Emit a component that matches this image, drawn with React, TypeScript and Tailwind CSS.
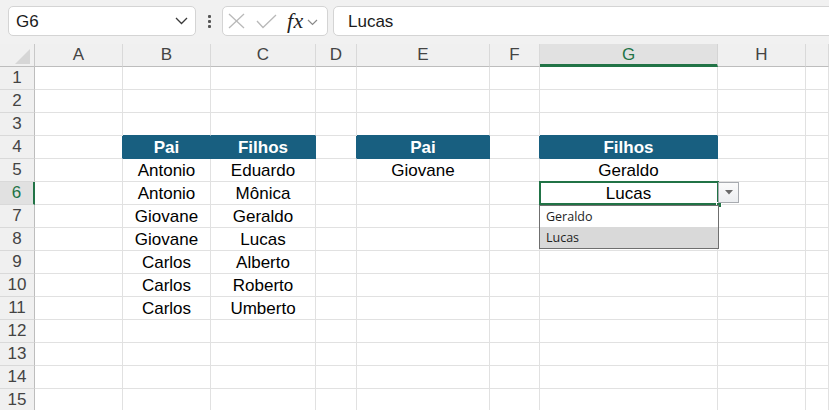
import React from "react";

type Cell = { text: string; head?: boolean };

const COLS = ["A", "B", "C", "D", "E", "F", "G", "H", "I"];

const DATA: Record<number, Record<string, Cell>> = {
  4: {
    B: { text: "Pai", head: true },
    C: { text: "Filhos", head: true },
    E: { text: "Pai", head: true },
    G: { text: "Filhos", head: true },
  },
  5: {
    B: { text: "Antonio" },
    C: { text: "Eduardo" },
    E: { text: "Giovane" },
    G: { text: "Geraldo" },
  },
  6: { B: { text: "Antonio" }, C: { text: "Mônica" }, G: { text: "Lucas" } },
  7: { B: { text: "Giovane" }, C: { text: "Geraldo" } },
  8: { B: { text: "Giovane" }, C: { text: "Lucas" } },
  9: { B: { text: "Carlos" }, C: { text: "Alberto" } },
  10: { B: { text: "Carlos" }, C: { text: "Roberto" } },
  11: { B: { text: "Carlos" }, C: { text: "Umberto" } },
};

const isHead = (row: number, col: string) => !!DATA[row]?.[col]?.head;

function Toolbar() {
  return (
    <div className="h-[44px] bg-[#f1f1f1] flex items-start pt-[6px] pl-[8px] overflow-hidden">
      {/* name box */}
      <div className="w-[188px] h-[30px] bg-white border border-[#d4d4d4] rounded-[5px] flex items-center pl-[7px] pr-[6px] shrink-0">
        <span className="text-[17px] text-[#1b1b1b] flex-1 leading-none">G6</span>
        <svg width="13" height="8" viewBox="0 0 13 8" className="mr-[1px]">
          <polyline points="1,1 6.5,6.5 12,1" fill="none" stroke="#3a3a3a" strokeWidth="1.3" />
        </svg>
      </div>
      {/* grip */}
      <div className="w-[26px] h-[30px] flex flex-col items-center justify-center gap-[2px] shrink-0">
        <span className="w-[3px] h-[3px] bg-[#555] rounded-[1px]" />
        <span className="w-[3px] h-[3px] bg-[#555] rounded-[1px]" />
        <span className="w-[3px] h-[3px] bg-[#555] rounded-[1px]" />
      </div>
      {/* cancel / enter / function */}
      <div className="w-[106px] h-[30px] bg-white border border-[#d4d4d4] rounded-[5px] flex items-center shrink-0 pl-[5px]">
        <svg width="17" height="16" viewBox="0 0 17 16">
          <line x1="1" y1="1" x2="16" y2="15" stroke="#b9b9b9" strokeWidth="1.3" />
          <line x1="16" y1="1" x2="1" y2="15" stroke="#b9b9b9" strokeWidth="1.3" />
        </svg>
        <svg width="21" height="15" viewBox="0 0 21 15" className="ml-[11px]">
          <polyline points="1,7 7,13.5 20,1" fill="none" stroke="#b9b9b9" strokeWidth="1.3" />
        </svg>
        <span className="ml-[10px] font-['Liberation_Serif',serif] italic text-[22px] leading-none text-[#222] tracking-[0.5px]">
          fx
        </span>
        <svg width="11" height="7" viewBox="0 0 11 7" className="ml-[3px] mt-[2px]">
          <polyline points="1,1 5.5,5.5 10,1" fill="none" stroke="#8a8a8a" strokeWidth="1.2" />
        </svg>
      </div>
      {/* formula input */}
      <div className="ml-[5px] w-[520px] h-[30px] bg-white border border-[#d4d4d4] rounded-[5px] flex items-center pl-[14px] shrink-0">
        <span className="text-[17px] text-[#1b1b1b] leading-none">Lucas</span>
      </div>
    </div>
  );
}

function ColumnHeader() {
  return (
    <>
      <div className="h-[23px] bg-[#f0f0f0] border-r border-b border-r-[#c8c8c8] border-b-[#bdbdbd] relative overflow-hidden">
        <svg width="16" height="16" viewBox="0 0 16 16" className="absolute right-[3px] bottom-[1px]">
          <polygon points="15,0 15,15 0,15" fill="#d6d6d6" />
        </svg>
      </div>
      {COLS.map((c) =>
        c === "G" ? (
          <div
            key={c}
            className="h-[23px] bg-[#e1e1e1] border-r border-r-[#d4d4d4] border-b-[3px] border-b-[#217346] flex items-center justify-center text-[17px] text-[#217346] pt-[2px]"
          >
            {c}
          </div>
        ) : (
          <div
            key={c}
            className="h-[23px] bg-[#f0f0f0] border-r border-b border-r-[#d9d9d9] border-b-[#bdbdbd] flex items-center justify-center text-[17px] text-[#444]"
          >
            {/* the last column is cut at the window edge, so its letter sits off screen */}
            {c === "I" ? "" : c}
          </div>
        )
      )}
    </>
  );
}

function RowHeader({ n }: { n: number }) {
  if (n === 6) {
    return (
      <div className="h-[23px] bg-[#e1e1e1] border-r-2 border-b border-r-[#217346] border-b-[#d9d9d9] flex items-center justify-center text-[17px] text-[#217346]">
        {n}
      </div>
    );
  }
  return (
    <div className="h-[23px] bg-[#f0f0f0] border-r border-b border-r-[#bdbdbd] border-b-[#d9d9d9] flex items-center justify-center text-[17px] text-[#444]">
      {n}
    </div>
  );
}

function SelectedOverlay() {
  return (
    <>
      {/* active cell frame with fill handle */}
      <div className="absolute -left-px -top-px w-[180px] h-[24px] border-2 border-[#217346] pointer-events-none" />
      <div className="absolute left-[176px] top-[20px] w-[6px] h-[6px] bg-[#217346] border border-white" />
      {/* in-cell list button */}
      <div className="absolute left-[178px] top-0 w-[21px] h-[21px] border border-[#a8abb0] bg-gradient-to-b from-[#fbfbfb] to-[#eceef1] flex items-center justify-center">
        <svg width="8" height="5" viewBox="0 0 8 5">
          <polygon points="0,0 8,0 4,4.5" fill="#6a6a6a" />
        </svg>
      </div>
      {/* validation list */}
      <div className="absolute -left-px top-[23px] w-[180px] h-[44px] bg-white border border-[#6f6f6f] flex flex-col font-['Open_Sans',sans-serif] text-[12.5px] text-[#1e1e1e] z-10">
        <div className="h-[21px] flex items-center pl-[6px] pt-[1px]">Geraldo</div>
        <div className="h-[21px] flex items-center pl-[6px] pt-[1px] bg-[#d9d9d9]">Lucas</div>
      </div>
    </>
  );
}

function BodyCell({ row, col }: { row: number; col: string }) {
  const cell = DATA[row]?.[col];
  const nextCol = COLS[COLS.indexOf(col) + 1];
  const rightBlue = isHead(row, col) || (nextCol ? isHead(row, nextCol) : false);
  const bottomBlue = isHead(row, col) || isHead(row + 1, col);
  const selected = row === 6 && col === "G";

  return (
    <div
      className={[
        "h-[23px] border-r border-b border-[#e1e1e1] flex items-center justify-center text-[17px] leading-none whitespace-nowrap relative pt-[1px]",
        rightBlue ? "border-r-[#185f80]" : "",
        bottomBlue ? "border-b-[#185f80]" : "",
        cell?.head ? "bg-[#185f80] text-white font-bold" : "text-black",
        selected ? "z-10 overflow-visible" : "",
      ].join(" ")}
    >
      {cell?.text}
      {selected && <SelectedOverlay />}
    </div>
  );
}

function Sheet() {
  const rows = Array.from({ length: 15 }, (_, i) => i + 1);
  return (
    <div className="grid grid-cols-[35px_88px_88px_105px_41px_133px_50px_178px_88px_1fr]">
      <ColumnHeader />
      {rows.map((r) => (
        <React.Fragment key={r}>
          <RowHeader n={r} />
          {COLS.map((c) => (
            <BodyCell key={c} row={r} col={c} />
          ))}
        </React.Fragment>
      ))}
    </div>
  );
}

export default function App() {
  return (
    <div className="w-[829px] h-[410px] overflow-hidden bg-white font-['Liberation_Sans',Arial,sans-serif]">
      <Toolbar />
      <Sheet />
    </div>
  );
}
